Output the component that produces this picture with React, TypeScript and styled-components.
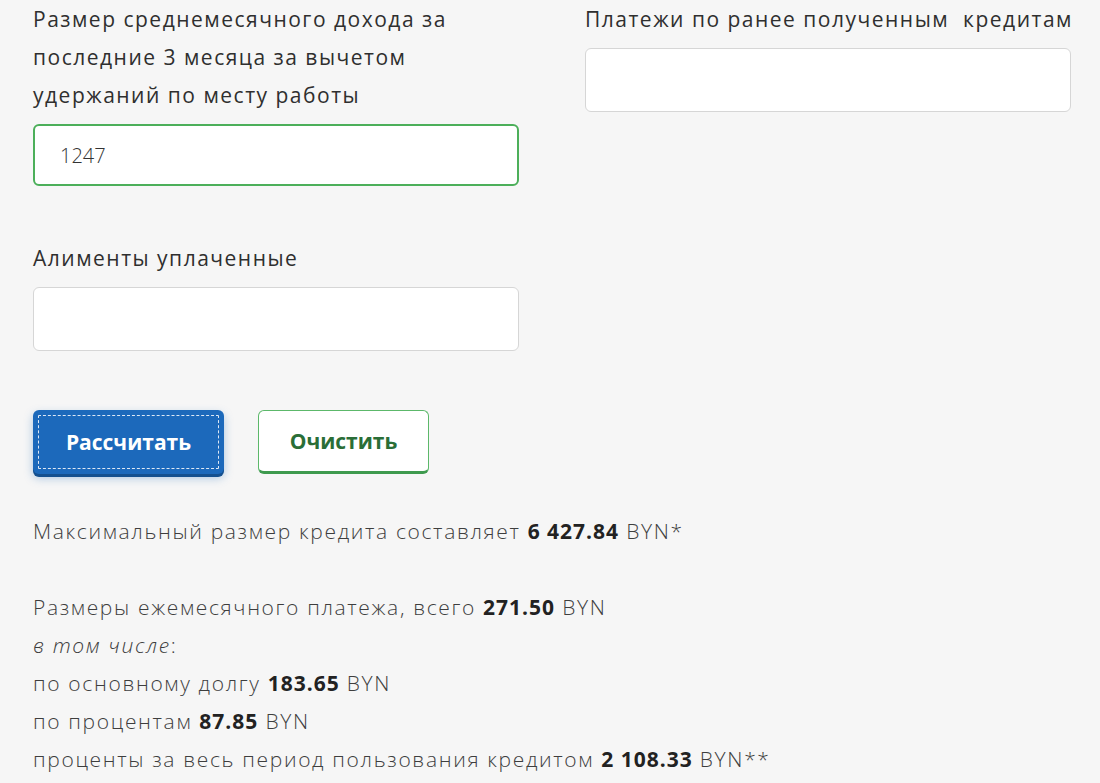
import React from "react";
import styled, { createGlobalStyle } from "styled-components";

const GlobalStyle = createGlobalStyle`
  html, body {
    margin: 0;
    padding: 0;
    background: #f6f6f6;
  }
  body {
    font-family: "Open Sans", "Noto Sans", sans-serif;
    color: #333;
  }
`;

const Page = styled.div`
  padding: 0 0 0 33px;
  width: 1100px;
  box-sizing: border-box;
`;

const FormGrid = styled.div`
  display: grid;
  grid-template-columns: 486px 486px;
  column-gap: 66px;
  align-items: start;
`;

const Column = styled.div`
  display: flex;
  flex-direction: column;
  gap: 53px;
`;

const Field = styled.label`
  display: flex;
  flex-direction: column;
  gap: 10px;
`;

const Label = styled.span`
  font-size: 21px;
  line-height: 38px;
  letter-spacing: 1.5px;
  color: #2f2f2f;
  white-space: nowrap;
`;

const Input = styled.input<{ $active?: boolean }>`
  box-sizing: border-box;
  width: 100%;
  height: ${(p) => (p.$active ? 62 : 64)}px;
  border-radius: 6px;
  border: ${(p) => (p.$active ? "2px solid #4caf5a" : "1px solid #d6d6d6")};
  background: #fff;
  padding: 0 25px;
  font-family: "Open Sans", sans-serif;
  font-weight: 300;
  font-size: 20px;
  color: #333;
  outline: none;
`;

const Buttons = styled.div`
  display: flex;
  gap: 34px;
  margin-top: 59px;
`;

const PrimaryButton = styled.button`
  height: 64px;
  width: 191px;
  border: none;
  border-radius: 6px;
  background: #1c69bb;
  box-shadow: 0 3px 0 #14508f, 0 4px 10px rgba(28, 105, 187, 0.35);
  color: #fff;
  font-family: "Open Sans", sans-serif;
  font-weight: 700;
  font-size: 21px;
  cursor: pointer;
  outline: 1px dashed rgba(255, 255, 255, 0.85);
  outline-offset: -6px;
`;

const SecondaryButton = styled.button`
  height: 64px;
  width: 171px;
  border: 1px solid #5cb86a;
  border-bottom: 3px solid #3e9a4e;
  border-radius: 6px;
  background: #fff;
  color: #2a6e37;
  font-family: "Open Sans", sans-serif;
  font-weight: 700;
  font-size: 21px;
  cursor: pointer;
`;

const Results = styled.div`
  margin-top: 38px;
  font-weight: 300;
  font-size: 21px;
  line-height: 38px;
  letter-spacing: 1.65px;
  color: #3e3e3e;
`;

const Line = styled.div<{ $gapBefore?: boolean }>`
  margin-top: ${(p) => (p.$gapBefore ? 38 : 0)}px;
  em {
    font-style: italic;
  }
  b {
    font-weight: 700;
    color: #222;
    letter-spacing: 1px;
  }
`;

export default function App() {
  return (
    <Page>
      <GlobalStyle />
      <FormGrid>
        <Column>
          <Field>
            <Label>
              Размер среднемесячного дохода за
              <br />
              последние 3 месяца за вычетом
              <br />
              удержаний по месту работы
            </Label>
            <Input $active defaultValue="1247" />
          </Field>
          <Field>
            <Label>Алименты уплаченные</Label>
            <Input />
          </Field>
        </Column>
        <Column>
          <Field>
            <Label>Платежи по ранее полученным&nbsp; кредитам</Label>
            <Input />
          </Field>
        </Column>
      </FormGrid>
      <Buttons>
        <PrimaryButton>Рассчитать</PrimaryButton>
        <SecondaryButton>Очистить</SecondaryButton>
      </Buttons>
      <Results>
        <Line>
          Максимальный размер кредита составляет <b>6 427.84</b> BYN*
        </Line>
        <Line $gapBefore>
          Размеры ежемесячного платежа, всего <b>271.50</b> BYN
        </Line>
        <Line>
          <em>в том числе</em>:
        </Line>
        <Line>
          по основному долгу <b>183.65</b> BYN
        </Line>
        <Line>
          по процентам <b>87.85</b> BYN
        </Line>
        <Line>
          проценты за весь период пользования кредитом <b>2 108.33</b> BYN**
        </Line>
      </Results>
    </Page>
  );
}
